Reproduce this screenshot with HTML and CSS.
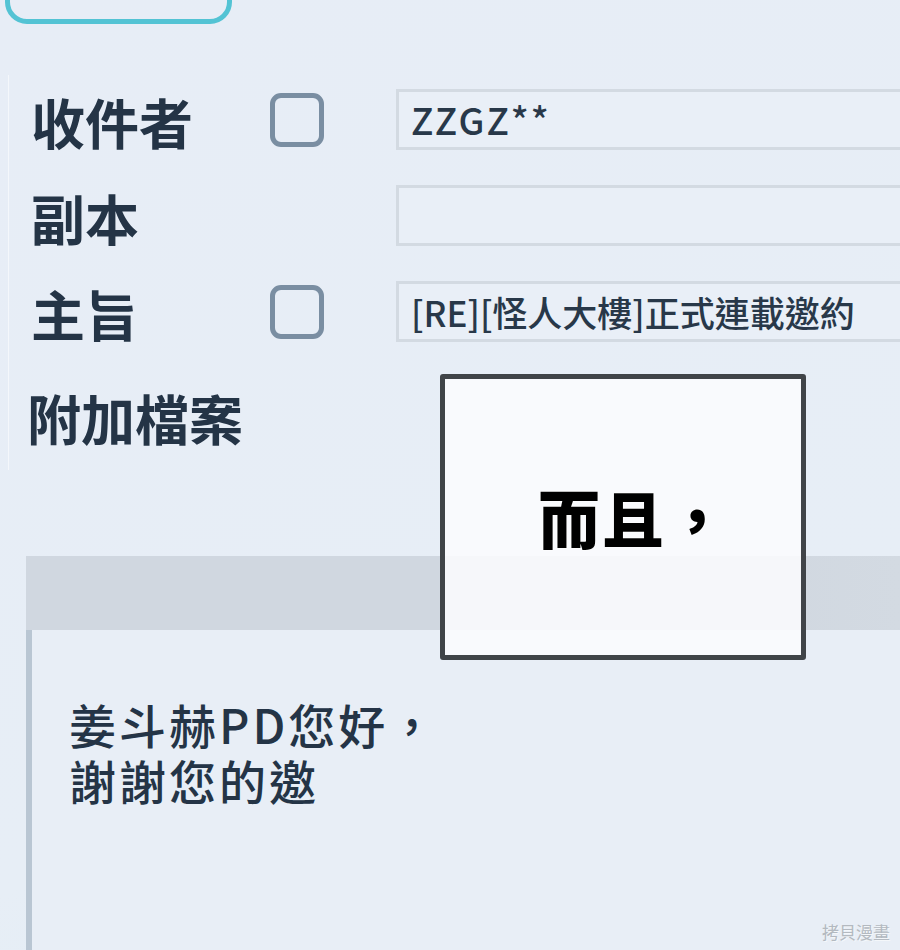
FILE: index.html
```html
<!DOCTYPE html>
<html lang="zh-Hant">
<head>
<meta charset="utf-8">
<title>郵件</title>
<link rel="stylesheet" href="styles.css">
</head>
<body>
<div class="page">
  <div class="toolbar">
    <div class="tool-btn">寄件</div>
    <div class="tool-text">儲存草稿</div>
    <div class="tool-text tool-text-right">預覽</div>
  </div>

  <div class="form">
    <div class="row">
      <div class="label">收件者</div>
      <div class="check"></div>
      <div class="field field-to">ZZGZ**</div>
    </div>
    <div class="row">
      <div class="label">副本</div>
      <div class="check check-none"></div>
      <div class="field"></div>
    </div>
    <div class="row">
      <div class="label">主旨</div>
      <div class="check"></div>
      <div class="field">[RE][怪人大樓]正式連載邀約</div>
    </div>
    <div class="row row-attach">
      <div class="label label-attach">附加檔案</div>
    </div>
  </div>

  <div class="panel">
    <div class="panel-head"></div>
    <div class="panel-body">
      <p class="message">姜斗赫PD您好，<br>謝謝您的邀</p>
    </div>
  </div>

  <div class="bubble"><span class="bubble-text">而且，</span></div>
  <div class="watermark">拷貝漫畫</div>
</div>
</body>
</html>
```

FILE: styles.css
```css
html, body {
  margin: 0;
  padding: 0;
}
body {
  width: 900px;
  height: 950px;
  overflow: hidden;
  font-family: "Noto Sans CJK TC", "Noto Sans", sans-serif;
  color: #263546;
}
.page {
  position: relative;
  width: 900px;
  height: 950px;
  overflow: hidden;
  background: linear-gradient(160deg, #e7edf6 0%, #e7eef6 70%, #e0edf4 100%);
}

/* top toolbar, mostly scrolled out of view */
.toolbar {
  display: flex;
  align-items: flex-start;
  height: 64px;
  margin-top: -40px;
  padding-left: 5px;
}
.tool-btn {
  box-sizing: border-box;
  width: 227px;
  height: 64px;
  border: 5px solid #53c3d4;
  border-radius: 22px;
  color: #8a97a5;
  font-size: 40px;
  line-height: 28px;
  padding-left: 40px;
  overflow: hidden;
}
.tool-text {
  margin-left: 34px;
  margin-top: -6px;
  color: #8b98a6;
  font-size: 40px;
  line-height: 40px;
  height: 43px;
}
.tool-text-right {
  margin-left: 380px;
}

/* form */
.form {
  box-sizing: border-box;
  margin-top: 51px;
  margin-left: 8px;
  height: 395px;
  border-left: 1px solid #f4f7fb;
  padding-top: 14px;
  padding-left: 22px;
  display: flex;
  flex-direction: column;
  gap: 35px;
}
.row {
  display: flex;
  align-items: center;
  height: 61px;
}
.row-attach {
  margin-top: 8px;
}
.label {
  width: 239px;
  flex: none;
  font-size: 54px;
  line-height: 54px;
  font-weight: 700;
  color: #243446;
  padding-top: 4px;
}
.label-attach {
  margin-left: -4px;
  width: auto;
}
.check {
  box-sizing: border-box;
  flex: none;
  width: 54px;
  height: 54px;
  border: 5px solid #7a8ea2;
  border-radius: 11px;
}
.check-none {
  border-color: transparent;
}
.field {
  box-sizing: border-box;
  flex: none;
  margin-left: 72px;
  width: 560px;
  height: 61px;
  border: 3px solid #d3dae2;
  background: #e9eff7;
  padding-left: 12px;
  font-size: 35px;
  line-height: 55px;
  font-weight: 500;
  color: #283849;
  white-space: nowrap;
}
.field-to {
  font-size: 37px;
  letter-spacing: 2px;
}

/* message panel */
.panel {
  margin-top: 86px;
  margin-left: 26px;
}
.panel-head {
  height: 74px;
  background: linear-gradient(90deg, #d0d7e0 0%, #d0d7e0 80%, #d3dae2 100%);
}
.panel-body {
  height: 400px;
  border-left: 6px solid #b9c6d3;
  background: #e8eef6;
  padding-top: 66px;
  padding-left: 37px;
  box-sizing: border-box;
}
.message {
  margin: 0;
  font-size: 47px;
  line-height: 56px;
  font-weight: 500;
  letter-spacing: 3px;
  color: #243446;
}

/* speech bubble overlay */
.bubble {
  position: absolute;
  left: 440px;
  top: 374px;
  box-sizing: border-box;
  width: 366px;
  height: 286px;
  border: 5px solid #404448;
  border-radius: 3px;
  background: rgba(251, 252, 254, 0.86);
  display: flex;
  align-items: center;
  justify-content: center;
}
.bubble-text {
  font-family: "Noto Sans CJK TC", serif;
  font-weight: 900;
  font-size: 62px;
  line-height: 62px;
  color: #000;
  letter-spacing: 2px;
  text-shadow: 0 0 3px #fff, 0 0 2px #fff;
  padding-left: 22px;
}

.watermark {
  position: absolute;
  right: 10px;
  bottom: 8px;
  font-family: "Noto Sans CJK TC", serif;
  font-size: 17px;
  line-height: 20px;
  color: #b3b9c0;
  text-shadow: 1px 1px 0 #f4f7fa;
}
```
